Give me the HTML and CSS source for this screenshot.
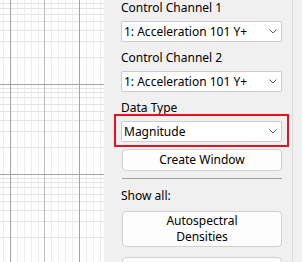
FILE: index.html
```html
<!DOCTYPE html>
<html>
<head>
<meta charset="utf-8">
<link rel="stylesheet" href="styles.css">
</head>
<body>
<div class="app">
  <div class="plot">
    <svg width="104" height="262" viewBox="0 0 104 262">
      <g class="minor-v">
        <line x1="3.5" y1="0" x2="3.5" y2="262"/>
        <line x1="17.5" y1="0" x2="17.5" y2="262"/>
        <line x1="24.5" y1="0" x2="24.5" y2="262"/>
        <line x1="31.5" y1="0" x2="31.5" y2="262"/>
        <line x1="38.5" y1="0" x2="38.5" y2="262"/>
        <line x1="51.5" y1="0" x2="51.5" y2="262"/>
        <line x1="58.5" y1="0" x2="58.5" y2="262"/>
        <line x1="65.5" y1="0" x2="65.5" y2="262"/>
        <line x1="72.5" y1="0" x2="72.5" y2="262"/>
        <line x1="86.5" y1="0" x2="86.5" y2="262"/>
        <line x1="93.5" y1="0" x2="93.5" y2="262"/>
        <line x1="100.5" y1="0" x2="100.5" y2="262"/>
      </g>
      <g class="minor-h">
        <line x1="0" y1="3.5" x2="104" y2="3.5"/>
        <line x1="0" y1="8.5" x2="104" y2="8.5"/>
        <line x1="0" y1="14.5" x2="104" y2="14.5"/>
        <line x1="0" y1="21.5" x2="104" y2="21.5"/>
        <line x1="0" y1="30.5" x2="104" y2="30.5"/>
        <line x1="0" y1="41.5" x2="104" y2="41.5"/>
        <line x1="0" y1="57.5" x2="104" y2="57.5"/>
        <line x1="0" y1="88.5" x2="104" y2="88.5"/>
        <line x1="0" y1="92.5" x2="104" y2="92.5"/>
        <line x1="0" y1="97.5" x2="104" y2="97.5"/>
        <line x1="0" y1="104.5" x2="104" y2="104.5"/>
        <line x1="0" y1="111.5" x2="104" y2="111.5"/>
        <line x1="0" y1="120.5" x2="104" y2="120.5"/>
        <line x1="0" y1="131.5" x2="104" y2="131.5"/>
        <line x1="0" y1="147.5" x2="104" y2="147.5"/>
        <line x1="0" y1="178.5" x2="104" y2="178.5"/>
        <line x1="0" y1="182.5" x2="104" y2="182.5"/>
        <line x1="0" y1="187.5" x2="104" y2="187.5"/>
        <line x1="0" y1="194.5" x2="104" y2="194.5"/>
        <line x1="0" y1="201.5" x2="104" y2="201.5"/>
        <line x1="0" y1="210.5" x2="104" y2="210.5"/>
        <line x1="0" y1="221.5" x2="104" y2="221.5"/>
        <line x1="0" y1="237.5" x2="104" y2="237.5"/>
      </g>
      <g class="major">
        <line x1="10.5" y1="0" x2="10.5" y2="262"/>
        <line class="mid" x1="44.5" y1="0" x2="44.5" y2="262"/>
        <line x1="79.5" y1="0" x2="79.5" y2="262"/>
        <line x1="0" y1="84.5" x2="104" y2="84.5"/>
        <line x1="0" y1="174.5" x2="104" y2="174.5"/>
      </g>
    </svg>
  </div>
  <div class="panel">
    <div class="controls">
      <div class="label">Control Channel 1</div>
      <div class="select"><span>1: Acceleration 101 Y+</span><svg class="chev" width="8" height="5" viewBox="0 0 8 5"><path d="M0.5 0.5 L4 4 L7.5 0.5"/></svg></div>
      <div class="label">Control Channel 2</div>
      <div class="select"><span>1: Acceleration 101 Y+</span><svg class="chev" width="8" height="5" viewBox="0 0 8 5"><path d="M0.5 0.5 L4 4 L7.5 0.5"/></svg></div>
      <div class="label">Data Type</div>
      <div class="highlight">
        <div class="select tight"><span>Magnitude</span><svg class="chev" width="8" height="5" viewBox="0 0 8 5"><path d="M0.5 0.5 L4 4 L7.5 0.5"/></svg></div>
        <span class="ring"></span>
      </div>
      <button class="btn one">Create Window</button>
      <div class="sep"></div>
      <div class="label show">Show all:</div>
      <button class="btn two">Autospectral<br>Densities</button>
      <button class="btn two" aria-label="Cross Spectra"></button>
    </div>
  </div>
  <div class="edge"></div>
</div>
</body>
</html>
```
FILE: styles.css
```css
html, body {
  margin: 0;
  padding: 0;
  overflow: hidden;
}
body {
  width: 302px;
  height: 262px;
  font-family: "Noto Sans", "Open Sans", sans-serif;
  font-size: 12px;
  color: #000;
  background: #f0f0f0;
}
.app {
  display: flex;
  height: 262px;
}
.plot {
  width: 104px;
  height: 262px;
  background: #fff;
  flex: none;
}
.plot svg {
  display: block;
}
.minor-v line {
  stroke: #eeeeee;
  stroke-width: 1;
}
.minor-h line {
  stroke: #e4e4e4;
  stroke-width: 1;
}
.major line {
  stroke: #a3a3a3;
  stroke-width: 1;
}
.major line.mid {
  stroke: #bdbdbd;
}
.panel {
  width: 188px;
  flex: none;
  background: #f0f0f0;
  border-right: 1px solid #dcdcdc;
  overflow: hidden;
}
.edge {
  flex: 1;
  background: #f0f0f0;
}
.controls {
  padding-left: 17px;
  width: 161px;
  display: flex;
  flex-direction: column;
}
.label {
  height: 15px;
  line-height: 15px;
  margin-bottom: 6px;
  white-space: nowrap;
}
.select {
  box-sizing: border-box;
  height: 21px;
  width: 161px;
  background: #fff;
  border: 1px solid #cccccc;
  border-radius: 2px;
  display: flex;
  align-items: center;
  justify-content: space-between;
  padding: 0 4px 0 2px;
  margin-bottom: 8px;
  line-height: 16px;
  white-space: nowrap;
}
.select.tight {
  margin-bottom: 0;
}
.chev {
  display: block;
  flex: none;
}
.chev path {
  fill: none;
  stroke: #606060;
  stroke-width: 1;
}
.highlight {
  position: relative;
  margin-bottom: 7px;
}
.ring {
  position: absolute;
  left: -7px;
  right: -7px;
  top: -7px;
  bottom: -5px;
  border: 2px solid #e81123;
  pointer-events: none;
}
.btn {
  box-sizing: border-box;
  width: 160px;
  margin-left: 1px;
  background: #fdfdfd;
  border: 1px solid #d0d0d0;
  border-radius: 4px;
  font-family: inherit;
  font-size: 12px;
  color: #000;
  line-height: 16px;
  padding: 1px 0;
  text-align: center;
  flex: none;
}
.btn.one {
  height: 22px;
  padding: 2px 0;
}
.btn.two {
  height: 36px;
  margin-bottom: 10px;
}
.sep {
  height: 1px;
  width: 160px;
  margin-left: 1px;
  background: #a0a0a0;
  margin-top: 7px;
  margin-bottom: 9px;
}
.label.show {
  margin-bottom: 8px;
}
```
